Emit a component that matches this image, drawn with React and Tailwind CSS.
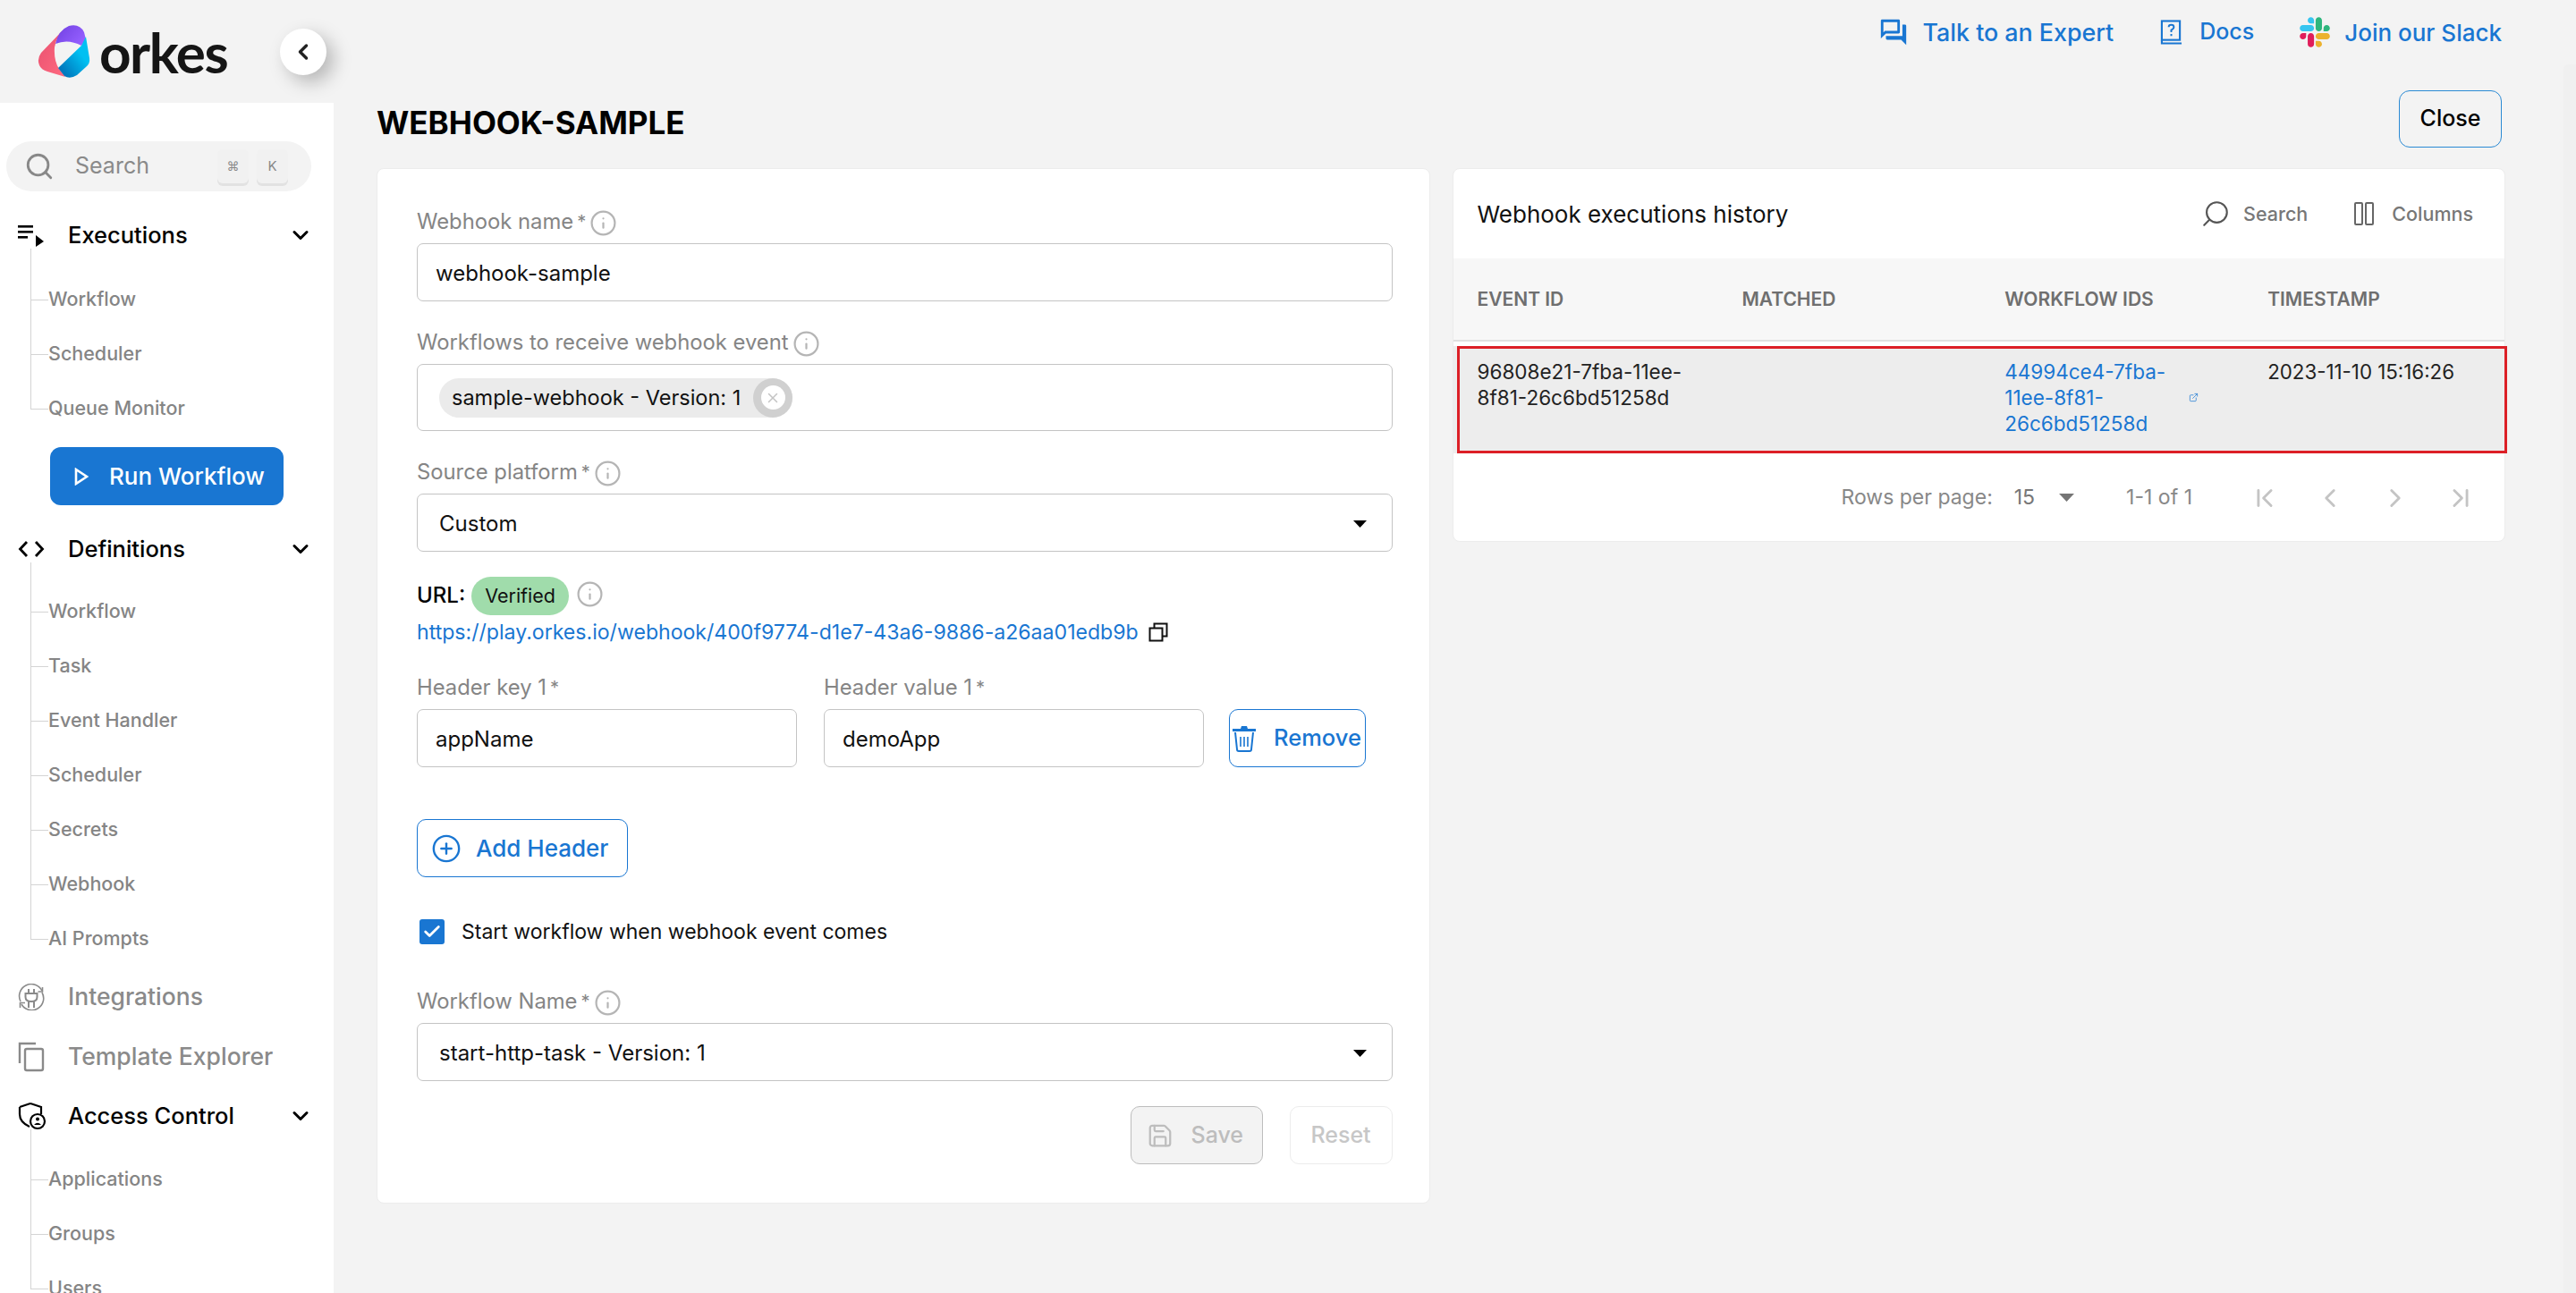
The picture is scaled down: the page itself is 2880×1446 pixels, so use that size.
import {
  ChevronDown,
  ChevronFirst,
  ChevronLast,
  ChevronLeft,
  ChevronRight,
  CirclePlus,
  ExternalLink,
  Info,
  Save,
  Search,
  Check,
  X,
} from 'lucide-react';
import { MdOutlineQuestionAnswer } from 'react-icons/md';

const Logo = () => (
  <svg viewBox="42 26 60 62" className="h-[62px] w-[60px] shrink-0">
    <defs>
      <linearGradient id="pink" x1="0" y1="0" x2="1" y2="1">
        <stop offset="0" stopColor="#e8506f" />
        <stop offset="1" stopColor="#ff6a80" />
      </linearGradient>
      <linearGradient id="purple" x1="0" y1="0" x2="1" y2="0.6">
        <stop offset="0" stopColor="#6f3fe0" />
        <stop offset="1" stopColor="#9560ff" />
      </linearGradient>
      <linearGradient id="blue" x1="1" y1="0" x2="0" y2="1">
        <stop offset="0.35" stopColor="#00c0f2" />
        <stop offset="1" stopColor="#0062ad" />
      </linearGradient>
    </defs>
    <path d="M71 32 L46 58 Q41 65 44 72 Q46 77 53 79 L73 85 L66 76 Q60 66 61 52 Q63 40 71 32Z" fill="url(#pink)" />
    <path d="M62 48 Q65 33 77 28 Q89 25 94 35 L96 43 L91 50 Q76 42 62 48Z" fill="url(#purple)" />
    <path d="M91 50 L96 40 L100 64 Q101 70 96 74 L86 83 Q78 88 72 84 L65 75Z" fill="url(#blue)" />
  </svg>
);

const ExecutionsIcon = () => (
  <svg viewBox="0 0 30 26" className="h-[26px] w-[30px]" fill="#000">
    <rect x="0" y="2" width="17" height="2.6" />
    <rect x="0" y="8" width="17" height="2.6" />
    <rect x="0" y="14" width="11" height="2.6" />
    <path d="M20 13 L29 20 L20 26Z" />
  </svg>
);

const CodeIcon = () => (
  <svg viewBox="0 0 30 20" className="h-[20px] w-[30px]" fill="none" stroke="#000" strokeWidth="2.8">
    <path d="M10 2 L2.5 10 L10 18" />
    <path d="M20 2 L27.5 10 L20 18" />
  </svg>
);

const IntegrationsIcon = () => (
  <svg viewBox="0 0 30 30" className="h-[30px] w-[30px]" fill="none" stroke="#8a8a8a" strokeWidth="1.6">
    <path d="M3 20 A13 13 0 0 1 27 8" />
    <path d="M27 10 A13 13 0 0 1 4 23" />
    <path d="M27.5 4 V9 H22.5" />
    <path d="M2.5 27 V21.5 H8" />
    <path d="M8.5 11 H21.5 V15 Q21.5 20 15 20 Q8.5 20 8.5 15Z" strokeWidth="2" />
    <path d="M12 6 V11 M18 6 V11 M12 20 V27 M18 20 V27" strokeWidth="2" />
  </svg>
);

const TemplateIcon = () => (
  <svg viewBox="0 0 30 34" className="h-[34px] w-[30px]" fill="none" stroke="#8a8a8a" strokeWidth="2.4">
    <path d="M2 24 V2 H20" />
    <rect x="8" y="8" width="20" height="24" rx="2" />
  </svg>
);

const AccessIcon = () => (
  <svg viewBox="0 0 32 32" className="h-[32px] w-[32px]" fill="none" stroke="#000" strokeWidth="2.2">
    <path d="M14 2 L26 6 V14 M2 6 L14 2 M2 6 V14 Q2 23 13 28" />
    <circle cx="22" cy="22" r="8" fill="#fff" />
    <circle cx="22" cy="19.5" r="2" fill="#000" stroke="none" />
    <path d="M18 26 Q22 21.5 26 26Z" fill="#000" stroke="none" />
  </svg>
);

const DocsIcon = () => (
  <svg viewBox="0 0 26 30" className="h-[30px] w-[25px]" fill="none" stroke="#1976d2" strokeWidth="2.2">
    <rect x="2" y="2" width="21" height="22" />
    <path d="M2 24 V28 H25" />
    <path d="M10 9 Q10 6.5 13 6.5 Q16 6.5 16 9 Q16 11 13 12.5 V15 M13 17 V19.5" strokeWidth="2" />
  </svg>
);

const SlackIcon = () => (
  <svg viewBox="0 0 127 127" className="h-[34px] w-[34px]">
    <path fill="#E01E5A" d="M27.2 80c0 7.3-5.9 13.2-13.2 13.2C6.7 93.2.8 87.3.8 80c0-7.3 5.9-13.2 13.2-13.2h13.2V80zm6.6 0c0-7.3 5.9-13.2 13.2-13.2 7.3 0 13.2 5.9 13.2 13.2v33c0 7.3-5.9 13.2-13.2 13.2-7.3 0-13.2-5.9-13.2-13.2V80z" />
    <path fill="#36C5F0" d="M47 27c-7.3 0-13.2-5.9-13.2-13.2C33.8 6.5 39.7.6 47 .6c7.3 0 13.2 5.9 13.2 13.2V27H47zm0 6.7c7.3 0 13.2 5.9 13.2 13.2 0 7.3-5.9 13.2-13.2 13.2H13.9C6.6 60.1.7 54.2.7 46.9c0-7.3 5.9-13.2 13.2-13.2H47z" />
    <path fill="#2EB67D" d="M99.9 46.9c0-7.3 5.9-13.2 13.2-13.2 7.3 0 13.2 5.9 13.2 13.2 0 7.3-5.9 13.2-13.2 13.2H99.9V46.9zm-6.6 0c0 7.3-5.9 13.2-13.2 13.2-7.3 0-13.2-5.9-13.2-13.2V13.8C66.9 6.5 72.8.6 80.1.6c7.3 0 13.2 5.9 13.2 13.2v33.1z" />
    <path fill="#ECB22E" d="M80.1 99.8c7.3 0 13.2 5.9 13.2 13.2 0 7.3-5.9 13.2-13.2 13.2-7.3 0-13.2-5.9-13.2-13.2V99.8h13.2zm0-6.6c-7.3 0-13.2-5.9-13.2-13.2 0-7.3 5.9-13.2 13.2-13.2h33.1c7.3 0 13.2 5.9 13.2 13.2 0 7.3-5.9 13.2-13.2 13.2H80.1z" />
  </svg>
);

const CopyIcon = () => (
  <svg viewBox="0 0 22 22" className="ml-[11px] h-[22px] w-[22px]" fill="none" stroke="#111" strokeWidth="2">
    <path d="M6.5 6.5 V1.5 H20.5 V15.5 H15.5" />
    <rect x="1.5" y="6.5" width="14" height="14" />
  </svg>
);

const TrashIcon = () => (
  <svg viewBox="0 0 28 30" className="h-[30px] w-[28px] shrink-0" fill="none" stroke="#1976d2">
    <path d="M10 4 L11 1 H17 L18 4 H27 V7 H1 V4Z" fill="#1976d2" stroke="none" />
    <path d="M4 8 L6 27 Q6 29 8 29 H20 Q22 29 22 27 L24 8" strokeWidth="2" />
    <path d="M10 13 V24 M14 13 V24 M18 13 V24" strokeWidth="1.6" />
  </svg>
);

const Caret = ({ className = 'w-[15px] h-[8px]', fill = '#000' }) => (
  <svg viewBox="0 0 15 8" className={className}>
    <path d="M0 0 H15 L7.5 8Z" fill={fill} />
  </svg>
);

const NavHeader = ({ icon, label, open = false, muted = false, className = '' }) => (
  <div className={`flex h-[46px] items-center pr-[23px] ${className}`}>
    <div className="flex w-[76px] shrink-0 justify-start pl-[20px]">{icon}</div>
    <span className={`flex-1 font-medium ${muted ? 'text-[26.5px] text-[#8a8a8a]' : 'text-[25.5px] text-black'}`}>{label}</span>
    {open && <ChevronDown size={28} strokeWidth={2.6} className="text-black" />}
  </div>
);

const SubNav = ({ items, spacer = 'h-[27px]', className = '' }) => (
  <ul className={`-mt-[8px] pl-[34px] ${className}`}>
    <li className={`${spacer} w-px bg-[#d4d4d4]`} />
    {items.map((item, i) => (
      <li key={item} className="flex h-[61px] items-stretch">
        <div className="flex w-[20px] shrink-0 flex-col">
          <div className="flex-1 border-b border-l border-[#d4d4d4]" />
          <div className={`flex-1 ${i < items.length - 1 ? 'border-l border-[#d4d4d4]' : ''}`} />
        </div>
        <span className="flex items-center pb-[2px] text-[21.5px] font-medium text-[#858585]">{item}</span>
      </li>
    ))}
  </ul>
);

const Sidebar = () => (
  <aside className="flex h-full w-[373px] shrink-0 flex-col">
    <div className="flex h-[115px] shrink-0 items-center pl-[42px] pr-[8px]">
      <Logo />
      <span className="ml-[9px] font-[family-name:Lato] text-[62px] font-bold leading-none tracking-[-1.5px] text-[#151515]">orkes</span>
      <button type="button" className="ml-auto flex h-[52px] w-[52px] items-center justify-center rounded-full bg-white shadow-[8px_8px_20px_rgba(0,0,0,0.25)]">
        <ChevronLeft size={28} strokeWidth={3} className="text-[#222]" />
      </button>
    </div>
    <div className="flex-1 overflow-hidden bg-white pt-[43px]">
      <div className="ml-[7px] flex h-[56px] w-[341px] items-center rounded-full bg-[#f3f3f3] pl-[20px]">
        <Search size={34} strokeWidth={2} className="text-[#888]" />
        <span className="ml-[23px] flex-1 text-[25px] text-[#8a8a8a]">Search</span>
        <div className="mr-[26px] flex gap-[9px]">
          <kbd className="flex h-[38px] w-[35px] items-center justify-center rounded-[6px] bg-[#f1f1f1] font-[family-name:'DejaVu_Sans'] text-[14px] text-[#888] shadow-[0_3px_0_#e2e2e2]">⌘</kbd>
          <kbd className="flex h-[38px] w-[35px] items-center justify-center rounded-[6px] bg-[#f1f1f1] font-[family-name:Inter] text-[15px] text-[#888] shadow-[0_3px_0_#e2e2e2]">K</kbd>
        </div>
      </div>
      <NavHeader icon={<ExecutionsIcon />} label="Executions" open className="mt-[26px]" />
      <SubNav items={['Workflow', 'Scheduler', 'Queue Monitor']} />
      <button type="button" className="ml-[56px] mt-[12px] flex h-[65px] w-[261px] items-center rounded-[12px] bg-[#1976d2] pl-[27px] text-[26px] font-medium text-white">
        <svg viewBox="0 0 16 20" className="h-[20px] w-[16px]" fill="none" stroke="#fff" strokeWidth="2.6">
          <path d="M2 2 L14 10 L2 18Z" />
        </svg>
        <span className="ml-[23px]">Run Workflow</span>
      </button>
      <NavHeader icon={<CodeIcon />} label="Definitions" open className="mt-[26px]" />
      <SubNav spacer="h-[25px]" items={['Workflow', 'Task', 'Event Handler', 'Scheduler', 'Secrets', 'Webhook', 'AI Prompts']} />
      <NavHeader icon={<IntegrationsIcon />} label="Integrations" muted className="mt-[11px]" />
      <NavHeader icon={<TemplateIcon />} label="Template Explorer" muted className="mt-[21px]" />
      <NavHeader icon={<AccessIcon />} label="Access Control" open className="mt-[20px]" />
      <SubNav spacer="h-[26px]" items={['Applications', 'Groups', 'Users']} />
    </div>
  </aside>
);

const InfoIcon = () => <Info size={31} strokeWidth={1.7} className="shrink-0 text-[#b5b5b5]" />;

const Label = ({ children, required = false, info = false }) => (
  <div className="mb-[8px] flex h-[32px] items-center text-[23.8px] text-[#858585]">
    <span>{children}</span>
    {required && <span className="ml-[4px] text-[20px]">*</span>}
    {info && <span className="ml-[4px] flex translate-y-[1px]"><InfoIcon /></span>}
  </div>
);

const TextBox = ({ children, className = '' }) => (
  <div className={`flex h-[65px] items-center rounded-[7px] border border-[#c4c4c4] bg-white px-[20px] pt-[2px] text-[24px] text-[#111] ${className}`}>
    {children}
  </div>
);

const SelectBox = ({ children }) => (
  <TextBox className="justify-between pl-[24px] pr-[28px] text-[23px]">
    <span>{children}</span>
    <Caret />
  </TextBox>
);

const WebhookForm = () => (
  <section className="rounded-[8px] border border-[#ececec] bg-white pb-[43px] pl-[44px] pr-[41px] pt-[43px]">
    <Label required info>Webhook name</Label>
    <TextBox>webhook-sample</TextBox>

    <div className="mt-[30px]">
      <Label info>Workflows to receive webhook event</Label>
    </div>
    <div className="flex h-[75px] items-center rounded-[7px] border border-[#c4c4c4] pl-[24px]">
      <div className="flex h-[44px] items-center rounded-full bg-[#ebebeb] pl-[14px] text-[23.5px] text-[#111]">
        <span>sample-webhook - Version: 1</span>
        <span className="ml-[14px] flex h-[44px] w-[44px] items-center justify-center rounded-full bg-[#d0d0d0]">
          <span className="flex h-[27px] w-[27px] items-center justify-center rounded-full bg-white">
            <X size={18} strokeWidth={2} className="text-[#c4c4c4]" />
          </span>
        </span>
      </div>
    </div>

    <div className="mt-[30px]">
      <Label required info>Source platform</Label>
    </div>
    <SelectBox>Custom</SelectBox>

    <div className="mt-[28px] flex h-[43px] items-center">
      <span className="-translate-y-[1px] text-[24px] font-medium text-black">URL:</span>
      <span className="ml-[7px] flex h-[43px] items-center rounded-full bg-[#a0dcab] px-[15px] text-[21.5px] text-[#111]">Verified</span>
      <span className="ml-[8px] flex -translate-y-[2px]"><InfoIcon /></span>
    </div>
    <div className="mt-[2px] flex h-[34px] items-center text-[23.1px] text-[#1976d2]">
      <span>https://play.orkes.io/webhook/400f9774-d1e7-43a6-9886-a26aa01edb9b</span>
      <CopyIcon />
    </div>

    <div className="mt-[29px] flex items-end">
      <div className="w-[425px]">
        <Label required>Header key 1</Label>
        <TextBox>appName</TextBox>
      </div>
      <div className="ml-[30px] w-[425px]">
        <Label required>Header value 1</Label>
        <TextBox>demoApp</TextBox>
      </div>
      <button type="button" className="ml-[28px] flex h-[65px] w-[153px] items-center rounded-[10px] border border-[#1976d2] pl-[2px] text-[25.5px] font-medium text-[#1976d2]">
        <TrashIcon />
        <span className="ml-[19px]">Remove</span>
      </button>
    </div>

    <button type="button" className="mt-[58px] flex h-[65px] w-[236px] items-center rounded-[10px] border border-[#1976d2] pl-[15px] text-[26px] font-medium text-[#1976d2]">
      <CirclePlus size={34} strokeWidth={1.7} />
      <span className="ml-[16px]">Add Header</span>
    </button>

    <div className="mt-[47px] flex h-[28px] items-center pl-[3px]">
      <span className="flex h-[28px] w-[28px] items-center justify-center rounded-[3px] bg-[#1976d2]">
        <Check size={22} strokeWidth={3} className="text-white" />
      </span>
      <span className="ml-[19px] text-[23px] text-[#111]">Start workflow when webhook event comes</span>
    </div>

    <div className="mt-[48px]">
      <Label required info>Workflow Name</Label>
    </div>
    <SelectBox>start-http-task - Version: 1</SelectBox>

    <div className="mt-[28px] flex justify-end gap-[30px]">
      <button type="button" className="flex h-[65px] w-[148px] items-center rounded-[10px] border border-[#bdbdbd] bg-[#f3f3f3] pl-[17px] text-[25px] font-medium text-[#bdbdbd]">
        <Save size={30} strokeWidth={1.8} />
        <span className="ml-[20px]">Save</span>
      </button>
      <button type="button" className="flex h-[65px] w-[115px] items-center justify-center rounded-[10px] border border-[#ececec] text-[25px] font-medium text-[#c7c7c7]">
        Reset
      </button>
    </div>
  </section>
);

const columns = [
  { label: 'EVENT ID', pad: 'pl-[27px]' },
  { label: 'MATCHED', pad: 'pl-[29px]' },
  { label: 'WORKFLOW IDS', pad: 'pl-[29px]' },
  { label: 'TIMESTAMP', pad: 'pl-[29px]' },
];

const HistoryTable = () => (
  <section className="h-[418px] rounded-[8px] border border-[#ececec] bg-white">
    <div className="flex h-[100px] items-center pl-[27px] pr-[35px]">
      <h2 className="flex-1 text-[26px] font-normal text-[#111]">Webhook executions history</h2>
      <div className="flex items-center text-[21.5px] font-medium text-[#777]">
        <Search size={34} strokeWidth={1.5} className="-scale-x-100 text-[#555]" />
        <span className="ml-[14px]">Search</span>
        <svg viewBox="0 0 22 26" className="ml-[52px] h-[26px] w-[22px]" fill="none" stroke="#666" strokeWidth="2">
          <rect x="1" y="1" width="8" height="24" rx="1" />
          <rect x="13" y="1" width="8" height="24" rx="1" />
        </svg>
        <span className="ml-[20px]">Columns</span>
      </div>
    </div>
    <div className="grid h-[93px] grid-cols-4 items-center border-b-2 border-[#e0e0e0] bg-[#f7f7f7]">
      {columns.map((c) => (
        <span key={c.label} className={`${c.pad} text-[21px] font-semibold text-[#6f6f6f]`}>{c.label}</span>
      ))}
    </div>
    <div className="relative mt-[5px] grid h-[120px] grid-cols-4 bg-[#ededed] pt-[14px] text-[22.5px] leading-[29px] text-[#222]">
      <div className="pl-[27px]">96808e21-7fba-11ee-<br />8f81-26c6bd51258d</div>
      <div />
      <div className="flex pl-[29px] text-[#1976d2]">
        <span>44994ce4-7fba-<br />11ee-8f81-<br />26c6bd51258d</span>
        <span className="ml-[26px] flex h-[87px] items-center">
          <ExternalLink size={11} strokeWidth={1.6} />
        </span>
      </div>
      <div className="whitespace-nowrap pl-[29px] text-[22.3px]">2023-11-10 15:16:26</div>
      <div className="pointer-events-none absolute -right-[3px] bottom-0 left-[4px] top-0 border-[3px] border-[#dc1f26]" />
    </div>
    <div className="flex h-[99px] items-center justify-end pr-[32px] text-[23px] text-[#888]">
      <span>Rows per page:</span>
      <span className="ml-[24px] text-[#777]">15</span>
      <Caret className="ml-[27px] h-[9px] w-[17px]" fill="#757575" />
      <span className="ml-[58px]">1-1 of 1</span>
      <div className="ml-[64px] flex items-center gap-[39px] text-[#c4c4c4]">
        <ChevronFirst size={34} strokeWidth={2} />
        <ChevronLeft size={34} strokeWidth={2} />
        <ChevronRight size={34} strokeWidth={2} />
        <ChevronLast size={34} strokeWidth={2} />
      </div>
    </div>
  </section>
);

const TopLink = ({ icon, label, gap = 'ml-[16px]', size = 'text-[26px]', className = '' }) => (
  <a className={`flex items-center font-medium text-[#1976d2] ${size} ${className}`}>
    {icon}
    <span className={gap}>{label}</span>
  </a>
);

export default function App() {
  return (
    <div className="relative flex h-[1446px] w-[2880px] overflow-hidden bg-[#f3f3f3] font-[family-name:Inter]">
      <Sidebar />
      <main className="flex-1 pl-[48px] pr-[79px]">
        <header className="flex h-[72px] items-center justify-end pr-[4px]">
          <TopLink icon={<MdOutlineQuestionAnswer size={34} />} label="Talk to an Expert" size="text-[26.8px]" />
          <TopLink icon={<DocsIcon />} label="Docs" gap="ml-[19px]" size="text-[25px]" className="ml-[52px]" />
          <TopLink icon={<SlackIcon />} label="Join our Slack" className="ml-[51px]" />
        </header>
        <div className="flex h-[116px] items-start justify-between pr-[4px]">
          <h1 className="mt-[45px] text-[35px] font-bold leading-[40px] text-black">WEBHOOK-SAMPLE</h1>
          <button type="button" className="mt-[29px] flex h-[64px] w-[115px] items-center justify-center rounded-[12px] border border-[#2a8ad4] text-[25px] font-medium text-black">
            Close
          </button>
        </div>
        <div className="grid grid-cols-2 items-start gap-[25px]">
          <WebhookForm />
          <HistoryTable />
        </div>
      </main>
      <div className="absolute bottom-0 right-0 top-[72px] w-[14px] rounded-tl-[6px] bg-[#f0f0f0]" />
    </div>
  );
}
